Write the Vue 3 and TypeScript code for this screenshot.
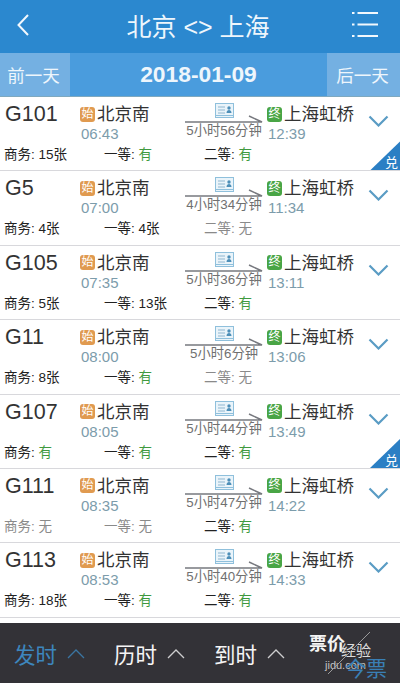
<script setup lang="ts">
interface Train {
  no: string
  dep: string
  arr: string
  dur: string
  biz: string
  first: string
  second: string
  swap?: boolean
}
const trains: Train[] = [
  { no: 'G101', dep: '06:43', arr: '12:39', dur: '5小时56分钟', biz: '15张', first: '有', second: '有', swap: true },
  { no: 'G5', dep: '07:00', arr: '11:34', dur: '4小时34分钟', biz: '4张', first: '4张', second: '无' },
  { no: 'G105', dep: '07:35', arr: '13:11', dur: '5小时36分钟', biz: '5张', first: '13张', second: '有' },
  { no: 'G11', dep: '08:00', arr: '13:06', dur: '5小时6分钟', biz: '8张', first: '有', second: '无' },
  { no: 'G107', dep: '08:05', arr: '13:49', dur: '5小时44分钟', biz: '有', first: '有', second: '有', swap: true },
  { no: 'G111', dep: '08:35', arr: '14:22', dur: '5小时47分钟', biz: '无', first: '无', second: '有' },
  { no: 'G113', dep: '08:53', arr: '14:33', dur: '5小时40分钟', biz: '18张', first: '有', second: '有' },
]
const seats = (t: Train) => [
  { label: '商务', value: t.biz },
  { label: '一等', value: t.first },
  { label: '二等', value: t.second },
]
const sorts = [
  { label: '发时', active: true },
  { label: '历时', active: false },
  { label: '到时', active: false },
]
</script>

<template>
  <div class="page">
    <header class="top">
      <svg class="back" width="16" height="26" viewBox="0 0 16 26"><path d="M13 3 L3.500 13 L13 23" fill="none" stroke="#f2f8fd" stroke-width="2" /></svg>
      <h1 class="title">北京 &lt;&gt; 上海</h1>
      <svg class="menu" width="26" height="26" viewBox="0 0 26 26">
        <path d="M0 2h2.500M5.500 2H26M0 13.500h2.500M5.500 13.500H26M0 25h2.500M5.500 25H26" stroke="#f2f8fd" stroke-width="2" fill="none" />
      </svg>
    </header>
    <nav class="dates">
      <span class="day prev">前一天</span>
      <strong class="date">2018-01-09</strong>
      <span class="day next">后一天</span>
    </nav>
    <main class="list">
      <article v-for="t in trains" :key="t.no" class="row">
        <div class="upper">
          <div class="no">{{ t.no }}</div>
          <div class="stop dep">
            <div class="station"><span class="tag orange">始</span><span>北京南</span></div>
            <div class="time">{{ t.dep }}</div>
          </div>
          <div class="mid">
            <svg width="19" height="15" viewBox="0 0 19 15" class="ticket">
              <rect x="0.500" y="0.500" width="18" height="14" fill="#eaf4fa" stroke="#8fc0dc" />
              <path d="M3 4h7M3 7h7M3 10h7" stroke="#8fb6cf" />
              <circle cx="14" cy="5" r="1.700" fill="#4d8fb8" />
              <path d="M11.500 10c0-4 5-4 5 0z" fill="#4d8fb8" />
              <path d="M1 12.500h17" stroke="#8fc0dc" />
            </svg>
            <svg class="arrow" width="78" height="8" viewBox="0 0 78 8"><path d="M0 7H77L64 1" fill="none" stroke="#77797f" stroke-width="1.500" /></svg>
            <div class="dur">{{ t.dur }}</div>
          </div>
          <div class="stop arr">
            <div class="station"><span class="tag green">终</span><span>上海虹桥</span></div>
            <div class="time">{{ t.arr }}</div>
          </div>
          <svg class="chev" width="21" height="12" viewBox="0 0 21 12"><path d="M1.500 1.500 L10.500 10.500 L19.500 1.500" fill="none" stroke="#5a9cc4" stroke-width="2.200" /></svg>
        </div>
        <div class="seats">
          <div v-for="s in seats(t)" :key="s.label" class="seat" :class="{ none: s.value === '无' }">
            {{ s.label }}: <span :class="{ have: s.value === '有' }">{{ s.value }}</span>
          </div>
        </div>
        <div v-if="t.swap" class="corner"><span>兑</span></div>
      </article>
    </main>
    <footer class="bar">
      <div v-for="s in sorts" :key="s.label" class="sort" :class="{ on: s.active }">
        <span>{{ s.label }}</span>
        <svg class="up" width="18" height="11" viewBox="0 0 18 11"><path d="M1 10 L9 2 L17 10" fill="none" stroke="currentColor" stroke-width="1.300" /></svg>
      </div>
      <div class="mark">
        <span class="mk3">jidu.com</span>
        <span class="mk4">今票</span>
        <span class="mk1">票价</span>
        <span class="mk2">经验</span>
        <svg class="slash" width="44" height="44" viewBox="0 0 44 44"><path d="M1 43 L43 1" stroke="#9a9a9a" /></svg>
      </div>
    </footer>
  </div>
</template>

<style scoped>
.page {
  width: 400px;
  height: 683px;
  display: flex;
  flex-direction: column;
  overflow: hidden;
  background: #fff;
  font-family: "Liberation Sans", "Noto Sans CJK SC", sans-serif;
}
.top {
  height: 53px;
  flex: none;
  background: #2b88cf;
  display: flex;
  align-items: center;
  justify-content: space-between;
  padding: 0 22px 0 15px;
  color: #eef6fc;
}
.back {
  margin: 0 13px 3px 0;
}
.menu {
  margin-bottom: 6px;
}
.title {
  margin: 0 0 3px;
  font-size: 25px;
  font-weight: 400;
}
.dates {
  height: 44px;
  flex: none;
  background: #4a9cdd;
  display: flex;
  align-items: center;
  border-bottom: 1px solid #7fa9bf;
  box-sizing: border-box;
  color: #eef6fc;
}
.day {
  height: 100%;
  display: flex;
  align-items: center;
  justify-content: center;
  background: #74b0e2;
  font-size: 17.500px;
}
.prev {
  width: 70px;
  padding-right: 3px;
  box-sizing: border-box;
}
.next {
  width: 73px;
  padding-right: 2px;
  box-sizing: border-box;
}
.date {
  flex: 1;
  text-align: center;
  font-size: 22.800px;
}
.list {
  flex: 1;
  min-height: 0;
}
.row {
  position: relative;
  height: 74.400px;
  box-sizing: border-box;
  border-bottom: 1px solid #d8d8dc;
  padding: 4px 0 0 4px;
  color: #222;
}
.upper {
  display: flex;
  height: 45px;
}
.no {
  width: 76px;
  font-size: 21.500px;
  line-height: 27px;
  padding-left: 1px;
  box-sizing: border-box;
  color: #333;
}
.stop {
  display: flex;
  flex-direction: column;
}
.dep {
  width: 105px;
}
.arr {
  width: 98px;
  margin-left: 4px;
}
.station {
  display: flex;
  align-items: center;
  font-size: 17.500px;
  line-height: 24px;
  margin-top: 1px;
  color: #333;
}
.tag {
  width: 15px;
  height: 15px;
  border-radius: 3px;
  margin-right: 2px;
  color: #fff;
  font-size: 12px;
  line-height: 15px;
  text-align: center;
}
.orange {
  background: #e09a50;
}
.green {
  background: #49a545;
}
.time {
  font-size: 15px;
  line-height: 19px;
  margin-top: -2px;
  color: #7c9cab;
  padding-left: 1px;
}
.mid {
  width: 78px;
  display: flex;
  flex-direction: column;
  align-items: center;
  position: relative;
  top: 2px;
}
.ticket {
  display: block;
}
.arrow {
  display: block;
  margin-top: -3px;
}
.dur {
  font-size: 13.300px;
  line-height: 16px;
  color: #707070;
  white-space: nowrap;
}
.chev {
  margin: 14px 0 0 3px;
}
.seats {
  display: flex;
  font-size: 13.500px;
  line-height: 18px;
  margin-top: 0;
}
.seat {
  width: 100px;
  color: #222;
}
.seat.none {
  color: #8a8a8a;
}
.have {
  color: #3f9a3f;
}
.corner {
  position: absolute;
  right: 0;
  bottom: 0;
  width: 30px;
  height: 29px;
  background: #2b7fc4;
  clip-path: polygon(100% 0, 100% 100%, 0 100%);
}
.corner span {
  position: absolute;
  right: 2px;
  bottom: 0;
  font-size: 13px;
  line-height: 15px;
  color: #fff;
}
.bar {
  margin-top: auto;
  height: 60px;
  flex: none;
  background: #333237;
  display: flex;
  align-items: center;
  padding-left: 14px;
  color: #f5f5f5;
  position: relative;
}
.sort {
  width: 100px;
  display: flex;
  align-items: center;
  gap: 10px;
  font-size: 21.500px;
}
.up {
  opacity: 0.8;
}
.sort.on {
  color: #3d86bd;
}
.mark {
  position: absolute;
  left: 300px;
  top: 0;
  width: 100px;
  height: 60px;
}
.mark span {
  position: absolute;
  white-space: nowrap;
}
.mk1 {
  left: 9px;
  top: 6px;
  font-size: 18px;
  font-weight: 700;
  color: #f4f4f4;
}
.mk2 {
  left: 41px;
  top: 16px;
  font-size: 15px;
  color: #dcdcdc;
}
.mk3 {
  left: 25px;
  top: 36px;
  font-size: 11px;
  color: #c4c4c4;
}
.mk4 {
  left: 45px;
  top: 29px;
  font-size: 21px;
  color: #3a7fb5;
}
.slash {
  position: absolute;
  left: 27px;
  top: 8px;
}
</style>
